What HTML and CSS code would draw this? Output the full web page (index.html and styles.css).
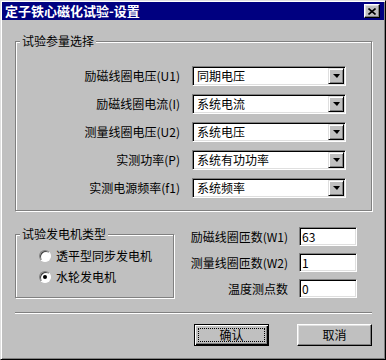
FILE: index.html
```html
<!DOCTYPE html>
<html lang="zh-CN">
<head>
  <meta charset="UTF-8">
  <title>定子铁心磁化试验-设置</title>
  <link rel="stylesheet" href="styles.css">
</head>
<body>
  <div class="window">
    <div class="titlebar">
      <span class="title">定子铁心磁化试验-设置</span>
      <button class="close">
        <svg width="8" height="7" viewBox="0 0 8 7"><path d="M0.5 0.5L7.5 6.5M7.5 0.5L0.5 6.5" stroke="#000" stroke-width="1.6" fill="none"/></svg>
      </button>
    </div>
    <div class="content">
      <fieldset class="group params">
        <legend>试验参量选择</legend>
        <div class="rows">
          <div class="row"><label>励磁线圈电压(U1)</label><div class="combo"><span>同期电压</span><i class="drop"><b></b></i></div></div>
          <div class="row"><label>励磁线圈电流(I)</label><div class="combo"><span>系统电流</span><i class="drop"><b></b></i></div></div>
          <div class="row"><label>测量线圈电压(U2)</label><div class="combo"><span>系统电压</span><i class="drop"><b></b></i></div></div>
          <div class="row"><label>实测功率(P)</label><div class="combo"><span>系统有功功率</span><i class="drop"><b></b></i></div></div>
          <div class="row"><label>实测电源频率(f1)</label><div class="combo"><span>系统频率</span><i class="drop"><b></b></i></div></div>
        </div>
      </fieldset>

      <div class="lower">
        <fieldset class="group gen">
          <legend>试验发电机类型</legend>
          <div class="radios">
            <div class="radio"><span class="dot"></span>透平型同步发电机</div>
            <div class="radio"><span class="dot checked"></span>水轮发电机</div>
          </div>
        </fieldset>
        <div class="fields">
          <div class="field"><label>励磁线圈匝数(W1)</label><div class="edit">63</div></div>
          <div class="field"><label>测量线圈匝数(W2)</label><div class="edit">1</div></div>
          <div class="field"><label>温度测点数</label><div class="edit">0</div></div>
        </div>
      </div>

      <div class="sep"></div>

      <div class="buttons">
        <button class="btn default"><span>确认</span></button>
        <button class="btn"><span>取消</span></button>
      </div>
    </div>
  </div>
</body>
</html>
```

FILE: styles.css
```css
* {
  box-sizing: border-box;
}
html, body {
  margin: 0;
  height: 100%;
  overflow: hidden;
}
body {
  font-family: "Noto Sans CJK SC", "Liberation Sans", sans-serif;
  font-size: 12px;
  line-height: 16px;
  background: #c0c0c0;
  color: #000;
}
.window {
  width: 386px;
  height: 360px;
  border: 1px solid;
  border-color: #dfdfdf #000 #000 #dfdfdf;
  box-shadow: inset 1px 1px #fff, inset -1px -1px #808080;
  padding: 1px;
}
.titlebar {
  height: 18px;
  background: #000080;
  color: #fff;
  display: flex;
  align-items: center;
  justify-content: space-between;
  padding: 0 4px 0 3px;
}
.title {
  font-weight: bold;
  font-size: 13px;
}
.close {
  width: 16px;
  height: 14px;
  padding: 0;
  border: 1px solid;
  border-color: #fff #000 #000 #fff;
  box-shadow: inset -1px -1px #808080, inset 1px 1px #dfdfdf;
  background: #c0c0c0;
  display: flex;
  align-items: center;
  justify-content: center;
}
.close svg {
  display: block;
}
.content {
  padding: 13px 12px 0 13px;
}
.group {
  margin: 0;
  min-width: 0;
  border: 1px solid #808080;
  box-shadow: inset 1px 1px #fff, 1px 1px #fff;
}
.group legend {
  padding: 0 2px;
  margin-left: 4px;
  background: #c0c0c0;
  line-height: 16px;
}
.params {
  padding: 17px 25px 12px 0;
}
.rows {
  display: grid;
  row-gap: 8px;
}
.row {
  display: grid;
  grid-template-columns: 1fr 154px;
  column-gap: 12px;
  align-items: center;
  height: 20px;
}
.row label, .field label {
  text-align: right;
  white-space: nowrap;
}
.combo {
  height: 20px;
  background: #fff;
  border: 1px solid;
  border-color: #808080 #fff #fff #808080;
  box-shadow: inset 1px 1px #000, inset -1px -1px #dfdfdf;
  padding: 1px;
  display: flex;
  align-items: center;
}
.combo span {
  padding-left: 3px;
  flex: 1;
}
.drop {
  width: 16px;
  height: 16px;
  background: #c0c0c0;
  border: 1px solid;
  border-color: #dfdfdf #000 #000 #dfdfdf;
  box-shadow: inset 1px 1px #fff, inset -1px -1px #808080;
  display: flex;
  align-items: center;
  justify-content: center;
}
.drop b {
  width: 0;
  height: 0;
  border-top: 4px solid #000;
  border-left: 4px solid transparent;
  border-right: 3px solid transparent;
}
.lower {
  display: flex;
  align-items: flex-start;
  margin-top: 15px;
}
.gen {
  width: 160px;
  padding: 6px 8px 12px 0;
}
.radios {
  display: grid;
  row-gap: 5px;
  margin-left: 23px;
}
.radio {
  display: flex;
  align-items: center;
  gap: 5px;
  height: 16px;
  white-space: nowrap;
}
.dot {
  width: 12px;
  height: 12px;
  border-radius: 50%;
  background: #fff;
  border: 1px solid;
  border-color: #808080 #fff #fff #808080;
  box-shadow: inset 1px 1px #404040;
  display: inline-flex;
  align-items: center;
  justify-content: center;
}
.dot.checked::after {
  content: "";
  width: 4px;
  height: 4px;
  border-radius: 50%;
  background: #000;
}
.fields {
  flex: 1;
  display: grid;
  row-gap: 7px;
  margin: 1px 15px 0 17px;
}
.field {
  display: grid;
  grid-template-columns: 1fr 58px;
  column-gap: 11px;
  align-items: center;
}
.edit {
  height: 19px;
  background: #fff;
  border: 1px solid;
  border-color: #808080 #fff #fff #808080;
  box-shadow: inset 1px 1px #000, inset -1px -1px #dfdfdf;
  padding-left: 2px;
  display: flex;
  align-items: center;
}
.sep {
  margin-top: 14px;
  height: 2px;
  border-top: 1px solid #808080;
  border-bottom: 1px solid #fff;
}
.buttons {
  display: flex;
  justify-content: flex-end;
  gap: 28px;
  margin-top: 10px;
}
.btn {
  width: 75px;
  height: 22px;
  padding: 3px;
  font: inherit;
  color: #000;
  background: #c0c0c0;
  border: 1px solid;
  border-color: #fff #000 #000 #fff;
  box-shadow: inset -1px -1px #808080, inset 1px 1px #dfdfdf;
  display: flex;
}
.btn span {
  flex: 1;
  display: flex;
  align-items: center;
  justify-content: center;
  border: 1px solid transparent;
}
.btn.default {
  border-color: #000;
  box-shadow: inset 1px 1px #fff, inset -1px -1px #000, inset -2px -2px #808080;
}
.btn.default span {
  border: 1px dotted #000;
}
```
